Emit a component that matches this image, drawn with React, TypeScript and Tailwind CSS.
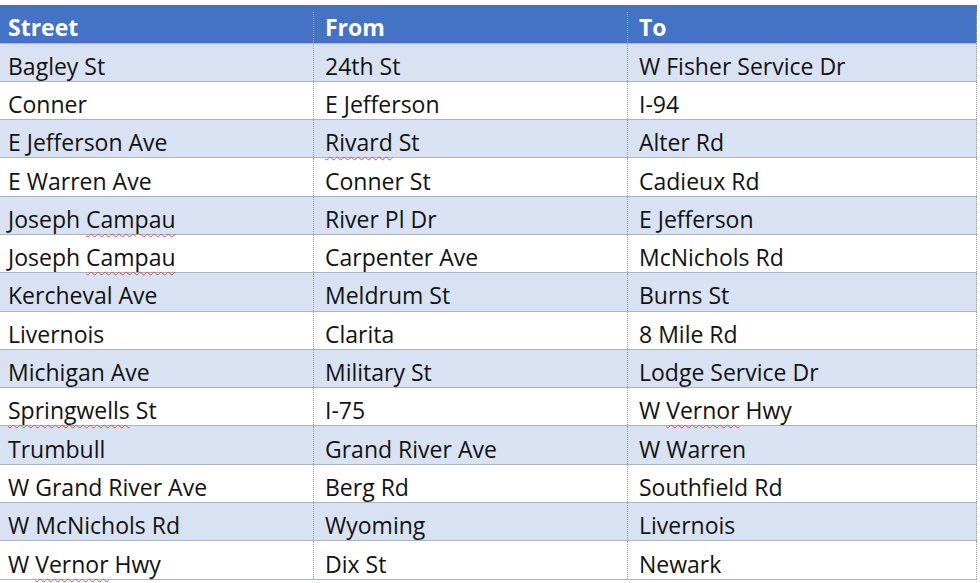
const rows: [string, string, string][] = [
  ["Bagley St", "24th St", "W Fisher Service Dr"],
  ["Conner", "E Jefferson", "I-94"],
  ["E Jefferson Ave", "Rivard St", "Alter Rd"],
  ["E Warren Ave", "Conner St", "Cadieux Rd"],
  ["Joseph Campau", "River Pl Dr", "E Jefferson"],
  ["Joseph Campau", "Carpenter Ave", "McNichols Rd"],
  ["Kercheval Ave", "Meldrum St", "Burns St"],
  ["Livernois", "Clarita", "8 Mile Rd"],
  ["Michigan Ave", "Military St", "Lodge Service Dr"],
  ["Springwells St", "I-75", "W Vernor Hwy"],
  ["Trumbull", "Grand River Ave", "W Warren"],
  ["W Grand River Ave", "Berg Rd", "Southfield Rd"],
  ["W McNichols Rd", "Wyoming", "Livernois"],
  ["W Vernor Hwy", "Dix St", "Newark"],
];

// words the spell checker flagged in the original document
const flagged = new Set(["Rivard", "Campau", "Springwells", "Vernor"]);

function CellText({ text }: { text: string }) {
  const words = text.split(" ");
  return (
    <span className="whitespace-pre">
      {words.map((word, i) => (
        <span key={i}>
          {i > 0 ? " " : null}
          {flagged.has(word) ? (
            <span className="underline decoration-wavy decoration-[#d9534f] decoration-1 underline-offset-[5px]">
              {word}
            </span>
          ) : (
            word
          )}
        </span>
      ))}
    </span>
  );
}

export default function App() {
  return (
    <div className="h-[583px] w-[980px] overflow-hidden bg-white pt-[5px] font-['Open_Sans',sans-serif] text-[23px] leading-none text-[#121212]">
      <div className="w-[977px]">
        <div className="grid h-[38.5px] grid-cols-[313px_314px_350px] border-b border-[#a9b6cd] bg-[#4472c4] pt-[7px] font-bold text-white">
          <div className="flex items-center pl-[8px]">Street</div>
          <div className="flex items-center border-l border-dotted border-[#a0a8b8] pl-[11px]">From</div>
          <div className="flex items-center border-x border-dotted border-[#a0a8b8] pl-[11px]">To</div>
        </div>
        {rows.map((row, i) => (
          <div
            className={`grid h-[38.3px] grid-cols-[313px_314px_350px] border-b border-[#a9b4c9] ${
              i % 2 === 0 ? "bg-[#d9e2f3]" : "bg-white"
            }`}
            key={i}
          >
            <div className="flex items-center pl-[8px] pt-[8px]">
              <CellText text={row[0]} />
            </div>
            <div className="flex items-center border-l border-dotted border-[#9a9a9a] pl-[11px] pt-[8px]">
              <CellText text={row[1]} />
            </div>
            <div className="flex items-center border-x border-dotted border-[#9a9a9a] pl-[11px] pt-[8px]">
              <CellText text={row[2]} />
            </div>
          </div>
        ))}
      </div>
    </div>
  );
}
